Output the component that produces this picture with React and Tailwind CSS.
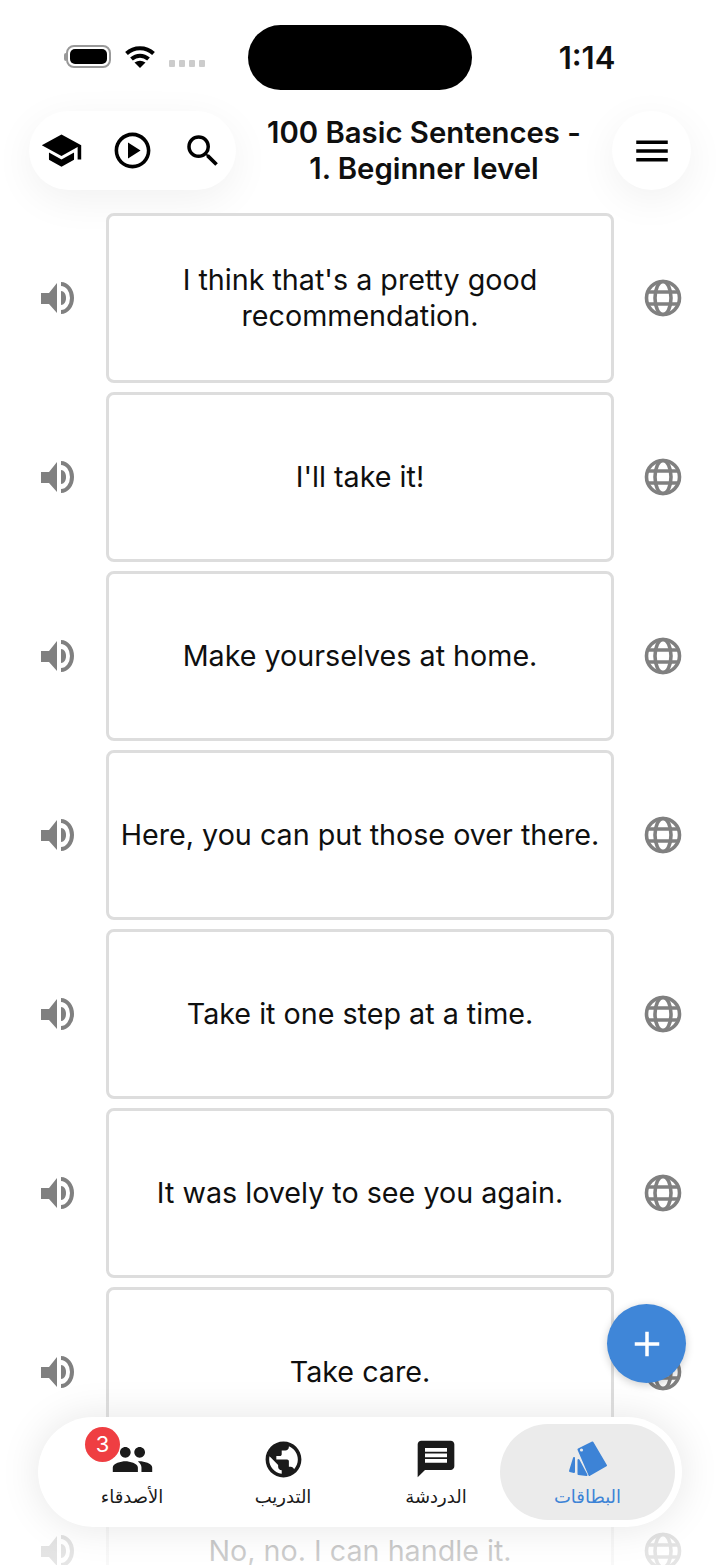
import React from 'react';
import { MdSchool, MdOutlinePlayCircle, MdSearch, MdMenu, MdPeople, MdPublic, MdMessage, MdAdd } from 'react-icons/md';

const sentences = [
    "I think that's a pretty good recommendation.",
    "I'll take it!",
    'Make yourselves at home.',
    'Here, you can put those over there.',
    'Take it one step at a time.',
    'It was lovely to see you again.',
    'Take care.',
    'No, no. I can handle it.',
];

const font = "font-['Inter','DejaVu_Sans',sans-serif]";

const Speaker = () => (
    <svg width="34" height="36" viewBox="0 0 34 36" fill="#808080">
        <path d="M0 13h8L16 3v30L8 24H0z" />
        <path d="M20 11c3 0 5 3 5 7s-2 7-5 7z" />
        <path d="M20 2A13 16 0 0 1 20 34V30A9 12 0 0 0 20 6z" />
    </svg>
);

const Globe = () => (
    <svg width="38" height="38" viewBox="0 0 38 38" fill="none" stroke="#808080" strokeWidth="3.6">
        <circle cx="19" cy="19" r="16.5" />
        <ellipse cx="19" cy="19" rx="8" ry="16.5" />
        <path d="M5 13h28M5 25h28" />
    </svg>
);

const Cards = () => (
    <svg width="42" height="40" viewBox="0 0 42 40" fill="#3d83d6" stroke="#3d83d6" strokeWidth="2" strokeLinejoin="round">
        <path d="M3 32 7 19v14z" />
        <path d="M11.5 21 19.5 36 11.5 35z" />
        <path d="M25.5 3.5 11.5 10.5 22.5 36 39 26.5z" />
        <circle cx="14.5" cy="11" r="1.6" fill="#ebebeb" stroke="none" />
    </svg>
);

const Row = ({ text }) => (
    <div className="flex items-center shrink-0">
        <div className="w-[106px] flex justify-start pl-[41px]">
            <Speaker />
        </div>
        <div className="w-[508px] h-[170px] shrink-0 flex items-center justify-center text-center bg-white border-[3px] border-[#dddddd] rounded-[8px] px-2 text-[28.7px] leading-[36px] text-[#0f0f0f]">
            {text}
        </div>
        <div className="flex-1 flex justify-start pl-[30px]">
            <Globe />
        </div>
    </div>
);

const tabs = [
    { label: 'الأصدقاء', width: 'w-[174px]', icon: <MdPeople size={43} color="#1a1a1a" /> },
    { label: 'التدريب', width: 'w-[128px]', icon: <MdPublic size={43} color="#1a1a1a" /> },
    { label: 'الدردشة', width: 'w-[128px] ml-[25px]', icon: <MdMessage size={44} color="#1a1a1a" /> },
];

const App = () => {
    return (
        <div className={`relative h-[1565px] w-[720px] overflow-hidden bg-white flex flex-col ${font}`}>
            {/* status bar */}
            <div className="relative flex items-start h-[65px] mt-[25px] shrink-0">
                <div className="w-[248px] shrink-0 flex items-center h-full pl-[64px] gap-[14px] pb-[2px]">
                    <div className="flex items-center">
                        <div className="w-[2px] h-[8px] bg-[#999999] rounded-l" />
                        <div className="w-[45px] h-[23px] rounded-[8px] border-2 border-[#999999] p-[2px]">
                            <div className="w-full h-full rounded-[5px] bg-black" />
                        </div>
                    </div>
                    <svg width="30" height="22" viewBox="0 0 30 22" fill="none" stroke="#000" strokeWidth="4">
                        <path d="M1.5 7.5C9 0.5 21 0.5 28.5 7.5" />
                        <path d="M6.5 13C11.5 8.5 18.5 8.5 23.5 13" />
                        <path d="M15 22 9.5 16.5Q15 13 20.5 16.5Z" fill="#000" stroke="none" />
                    </svg>
                    <div className="flex gap-[4px] mt-[14px]">
                        <div className="w-[6px] h-[7px] rounded-[1px] bg-[#cccccc]" />
                        <div className="w-[6px] h-[7px] rounded-[1px] bg-[#cccccc]" />
                        <div className="w-[6px] h-[7px] rounded-[1px] bg-[#cccccc]" />
                        <div className="w-[6px] h-[7px] rounded-[1px] bg-[#cccccc]" />
                    </div>
                </div>
                <div className="w-[224px] h-[65px] shrink-0 rounded-full bg-black" />
                <div className="flex-1 text-center pr-[18px] pt-[15px] text-[31px] leading-[36px] font-semibold text-[#0f0f0f]">
                    1:14
                </div>
            </div>

            {/* header */}
            <div className="flex items-center h-[79px] mt-[21px] pl-[29px] shrink-0">
                <div className="w-[207px] h-[79px] shrink-0 rounded-[40px] bg-white shadow-[0_10px_40px_rgba(0,0,0,0.06)] flex items-center justify-between pl-[11px] pr-[12px]">
                    <MdSchool size={43} color="#000" />
                    <MdOutlinePlayCircle size={43} color="#000" />
                    <MdSearch size={42} color="#000" />
                </div>
                <div className="w-[376px] shrink-0 px-[22px] text-center text-[29.3px] leading-[36px] font-semibold text-[#0f0f0f]">
                    100 Basic Sentences - 1. Beginner level
                </div>
                <div className="w-[79px] h-[79px] shrink-0 rounded-full bg-white shadow-[0_10px_40px_rgba(0,0,0,0.06)] flex items-center justify-center">
                    <MdMenu size={42} color="#000" />
                </div>
            </div>

            {/* list */}
            <div className="flex flex-col gap-[9px] mt-[23px] overflow-hidden flex-1">
                {sentences.map((s) => (
                    <Row key={s} text={s} />
                ))}
            </div>

            {/* fade behind the tab bar */}
            <div className="absolute inset-x-0 bottom-0 h-[170px] bg-gradient-to-b from-white/0 via-white/70 to-white/80" />

            {/* add button */}
            <div className="absolute left-[607px] top-[1304px] w-[79px] h-[79px] rounded-full bg-[#3f86d8] shadow-[0_2px_8px_rgba(0,0,0,0.2)] flex items-center justify-center">
                <MdAdd size={42} color="#fff" />
            </div>

            {/* tab bar */}
            <div className="absolute left-[38px] top-[1417px] w-[644px] h-[110px] rounded-[55px] bg-white shadow-[0_0_40px_rgba(0,0,0,0.1)] flex items-center pl-[7px]">
                {tabs.map((t) => (
                    <div key={t.label} className={`${t.width} h-[96px] flex flex-col items-center justify-center`}>
                        <div className="h-[48px] flex items-center justify-center">{t.icon}</div>
                        <div className="text-[18px] leading-[24px] text-[#1a1a1a] mt-[2px]">{t.label}</div>
                    </div>
                ))}
                <div className="w-[175px] h-[96px] rounded-[48px] bg-[#ebebeb] flex flex-col items-center justify-center">
                    <div className="h-[48px] flex items-center justify-center"><Cards /></div>
                    <div className="text-[18px] leading-[24px] text-[#3d83d6] mt-[2px]">البطاقات</div>
                </div>
                <div className="absolute left-[47px] top-[10px] w-[35px] h-[35px] rounded-full bg-[#ef3e42] text-white text-[22px] leading-[35px] text-center">
                    3
                </div>
            </div>
        </div>
    );
};

export default App;
